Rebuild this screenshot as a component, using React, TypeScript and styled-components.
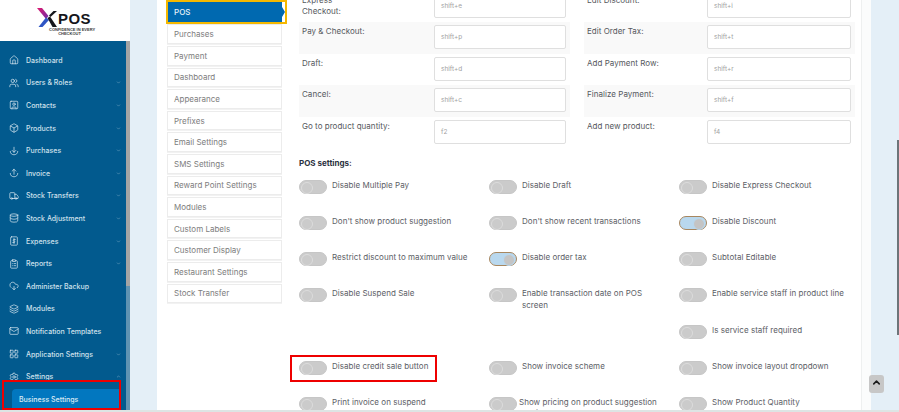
import React from 'react';
import styled, { createGlobalStyle } from 'styled-components';
import {
  Home, Users, SquareUser, Box, Truck, Database,
  ClipboardList, CloudDownload, Layers, Mail, LayoutGrid, Settings, ChevronDown, ChevronUp,
} from 'lucide-react';

const Global = createGlobalStyle`
  html, body { margin: 0; padding: 0; background: #e4eff7; }
  body { font-family: Inter, "Liberation Sans", sans-serif; overflow: hidden; }
  * { box-sizing: border-box; }
`;

const Page = styled.div`
  width: 899px; height: 412px; overflow: hidden; display: grid;
  grid-template-columns: 130px 1fr; background: #e4eff7; position: relative;
  border-bottom: 2px solid #dde5e4;
`;
const Sidebar = styled.aside`
  display: flex; flex-direction: column; height: 410px; overflow: hidden;
`;
const LogoBox = styled.div`
  height: 41px; background: #fff; display: flex; flex-direction: column; align-items: flex-start; padding: 8px 0 0 37px; flex: none;
`;
const LogoMark = styled.div`
  display: flex; align-items: center; height: 19px;
`;
const LogoWord = styled.span`
  font-family: "Liberation Sans", sans-serif; font-weight: 700; font-size: 15px; color: #16161c; letter-spacing: 0.4px; line-height: 18px; margin-top: 2px;
`;
const Tagline = styled.div`
  font-family: "Liberation Sans", sans-serif; font-weight: 700; font-size: 4px; line-height: 3.8px; color: #3a3a3a; text-align: center; margin: 1px 0 0 12px; width: 41px; white-space: nowrap;
`;
const NavScroll = styled.div`
  flex: 1; background: #025a8e; display: flex; position: relative; min-height: 0;
`;
const NavList = styled.nav`
  width: 126px; padding-top: 8px; display: flex; flex-direction: column;
`;
const ScrollTrack = styled.div`
  width: 4px; background: #5f93b2;
`;
const ScrollThumb = styled.div`
  height: 245px; background: #a4a4a4;
`;
const NavRow = styled.div`
  height: 22.6px; flex: none; display: flex; align-items: center; padding-left: 9px; color: #cfe0ec; font-size: 7px; font-weight: 500;
  svg.icon { width: 10px; height: 10px; margin-right: 7px; stroke-width: 1.6; flex: none; color: #e8f1f7; }
`;
const NavLabel = styled.span` flex: 1; white-space: nowrap; `;
const Caret = styled.span`
  display: flex; margin-right: 5px; color: #9fc0d5;
  svg { width: 5px; height: 5px; stroke-width: 2; }
`;
const ActiveFrame = styled.div`
  margin: -8px 5px 0 2px; height: 30px; border: 2px solid #ee0000; padding: 7px 0 0 8px; flex: none; position: relative;
`;
const ActiveItem = styled.div`
  height: 19px; background: #0277bf; border-radius: 4px 0 0 0; color: #dcebf5; font-size: 7px; font-weight: 500; display: flex; align-items: center; padding: 2px 0 0 7px;
`;

const Main = styled.main`
  padding: 0 28px 0 27px; height: 410px; overflow: hidden;
`;
const Card = styled.section`
  width: 714px; height: 410px; background: #fff; display: flex; overflow: hidden; padding-left: 9px;
  border-right: 9px solid #fbfcfc; box-shadow: inset -1px 0 0 #eef0f0;
`;
const TabList = styled.div`
  width: 121px; flex: none; display: flex; flex-direction: column;
`;
const PosTab = styled.div`
  height: 24.4px; border: 2px solid #f5b800; background: #fff; flex: none; display: flex;
`;
const PosFill = styled.div`
  width: 114px; background: #0069b0; color: #e6f1f8; font-size: 8px; font-weight: 500; display: flex; align-items: center; padding-left: 6px; position: relative;
`;
const Arrow = styled.span`
  position: absolute; right: -3px; top: 5px; width: 0; height: 0;
  border-top: 5px solid transparent; border-bottom: 5px solid transparent; border-left: 3px solid #0069b0;
`;
const Tab = styled.div`
  height: 19.6px; width: 115px; margin: 0 0 2px 1px; flex: none; background: #fff; border: 1px solid #ececec; color: #7d7d7d; font-size: 8px; display: flex; align-items: center; padding-left: 6px; box-shadow: 0 1px 0 #f2f2f2;
`;
const Panel = styled.div`
  flex: 1; padding-left: 12px; min-width: 0;
`;
const Shortcuts = styled.div`
  margin-top: -9px; display: grid; grid-template-columns: 271px 271px; column-gap: 14px;
`;
const ShortRow = styled.div<{ $shade?: boolean }>`
  height: 31.4px; display: flex; padding: 3px 4px 0 3px; background: ${p => (p.$shade ? '#f9f9f9' : '#fff')};
`;
const ShortLabel = styled.div<{ $w: number }>`
  width: ${p => p.$w}px; flex: none; font-size: 8px; line-height: 11px; color: #55585d; white-space: pre-line; padding-top: 1px; letter-spacing: 0.03px;
`;
const ShortInput = styled.div`
  height: 24px; flex: 1; border: 1px solid #dfdfdf; border-radius: 2px; background: #fff; font-size: 6.5px; color: #a2a2a2; display: flex; align-items: center; padding-left: 6px;
`;
const SectionTitle = styled.div`
  margin-top: 10px; font-size: 8px; font-weight: 700; color: #2b3140; line-height: 10px;
`;
const SettingGrid = styled.div`
  margin-top: 12px; display: grid; grid-template-columns: repeat(3, 190px); grid-auto-rows: 36.17px;
`;
const Setting = styled.div`
  display: flex; gap: 5px; align-items: flex-start; position: relative;
`;
const Flag = styled.span`
  position: absolute; left: -9px; top: -6px; width: 147px; height: 27px; border: 2px solid #ee0000;
`;
const Toggle = styled.span<{ $on?: boolean }>`
  width: 28px; height: 14px; flex: none; border-radius: 7px; position: relative;
  background: ${p => (p.$on ? '#b9d8ee' : '#cbcbcb')};
  border: ${p => (p.$on ? '1px solid #a8875f' : '1px solid #c6c6c6')};
  &::after {
    content: ''; position: absolute; top: 1px; width: 10px; height: 10px; border-radius: 50%;
    ${p => (p.$on ? 'right: 1px; background: #c4c4c4; border: 1px solid #b9d8ee;' : 'left: 1px; background: #cbcbcb; border: 1px solid #dcdcdc;')}
  }
`;
const SettingText = styled.span<{ $max?: number; $shift?: number }>`
  font-size: 8px; line-height: 11.5px; color: #5c6066; letter-spacing: 0.03px;
  max-width: ${p => (p.$max ? `${p.$max}px` : 'none')};
  margin-left: ${p => p.$shift ?? 0}px;
`;
const TopButton = styled.div`
  position: absolute; left: 869px; top: 375px; width: 15px; height: 18px; background: #c7c7c7; border-radius: 3px; display: flex; justify-content: center; color: #1b1b1b;
  svg { width: 11px; height: 11px; stroke-width: 3.4; margin-top: 2px; }
`;
const PageBar = styled.div`
  position: absolute; left: 897px; top: 140px; width: 2px; height: 195px; background: #6d7479;
`;

const Glyph: React.FC<{ children: React.ReactNode }> = ({ children }) => (
  <svg className="icon" viewBox="0 0 24 24" fill="none" stroke="currentColor" strokeLinecap="round" strokeLinejoin="round">
    {children}
  </svg>
);
const PurchaseIcon = () => (
  <Glyph><path d="M12 3v12M7.5 10.5 12 15l4.5-4.5M3 13c0 5 4 8 9 8s9-3 9-8" /></Glyph>
);
const InvoiceIcon = () => (
  <Glyph><path d="M12 15V3M7.5 7.5 12 3l4.5 4.5M3 13c0 5 4 8 9 8s9-3 9-8" /></Glyph>
);
const ExpenseIcon = () => (
  <Glyph>
    <rect x="4" y="2" width="16" height="20" rx="2" />
    <path d="M12 6v12M15 8.5h-4a2 2 0 0 0 0 3.5h2a2 2 0 0 1 0 3.5H9" />
  </Glyph>
);
const lucideIcon = (I: React.ComponentType<{ className?: string }>) => <I className="icon" />;

const nav: [React.ReactNode, string, boolean?][] = [
  [lucideIcon(Home), 'Dashboard'],
  [lucideIcon(Users), 'Users & Roles', true],
  [lucideIcon(SquareUser), 'Contacts', true],
  [lucideIcon(Box), 'Products', true],
  [<PurchaseIcon />, 'Purchases', true],
  [<InvoiceIcon />, 'Invoice', true],
  [lucideIcon(Truck), 'Stock Transfers', true],
  [lucideIcon(Database), 'Stock Adjustment', true],
  [<ExpenseIcon />, 'Expenses', true],
  [lucideIcon(ClipboardList), 'Reports', true],
  [lucideIcon(CloudDownload), 'Administer Backup'],
  [lucideIcon(Layers), 'Modules'],
  [lucideIcon(Mail), 'Notification Templates'],
  [lucideIcon(LayoutGrid), 'Application Settings', true],
];
const tabs = ['Purchases', 'Payment', 'Dashboard', 'Appearance', 'Prefixes', 'Email Settings', 'SMS Settings', 'Reward Point Settings', 'Modules', 'Custom Labels', 'Customer Display', 'Restaurant Settings', 'Stock Transfer'];
const shorts: [string, string, string, string][] = [
  ['Express\nCheckout:', 'shift+e', 'Edit Discount:', 'shift+i'],
  ['Pay & Checkout:', 'shift+p', 'Edit Order Tax:', 'shift+t'],
  ['Draft:', 'shift+d', 'Add Payment Row:', 'shift+r'],
  ['Cancel:', 'shift+c', 'Finalize Payment:', 'shift+f'],
  ['Go to product quantity:', 'f2', 'Add new product:', 'f4'],
];
const settings: { t?: string; on?: boolean; flag?: boolean; max?: number; shift?: number }[] = [
  { t: 'Disable Multiple Pay' }, { t: 'Disable Draft' }, { t: 'Disable Express Checkout' },
  { t: "Don't show product suggestion" }, { t: "Don't show recent transactions" }, { t: 'Disable Discount', on: true },
  { t: 'Restrict discount to maximum value' }, { t: 'Disable order tax', on: true }, { t: 'Subtotal Editable' },
  { t: 'Disable Suspend Sale' }, { t: 'Enable transaction date on POS screen', max: 124 }, { t: 'Enable service staff in product line' },
  {}, {}, { t: 'Is service staff required' },
  { t: 'Disable credit sale button', flag: true }, { t: 'Show invoice scheme' }, { t: 'Show invoice layout dropdown' },
  { t: 'Print invoice on suspend' }, { t: 'Show pricing on product suggestion tooltip', max: 142, shift: -3 }, { t: 'Show Product Quantity' },
];

export default function App() {
  return (
    <Page>
      <Global />
      <Sidebar>
        <LogoBox>
          <LogoMark>
            <svg width="21" height="19" viewBox="0 0 21 19">
              <defs>
                <linearGradient id="xg" x1="0" y1="0" x2="1" y2="1">
                  <stop offset="0" stopColor="#e0186f" />
                  <stop offset="1" stopColor="#6a2da8" />
                </linearGradient>
              </defs>
              <path d="M0 0 L5 0 L11.5 8 L9 11 Z" fill="url(#xg)" />
              <path d="M9 9.5 L12 12 L5.5 19 L1.5 19 Z" fill="#2f55c4" />
              <path d="M10.5 10 L13 8.5 L20 19 L15.5 19 Z" fill="#16161c" />
              <path d="M12 7.5 L16.5 3 L20 3 L13.5 9 Z" fill="#16161c" />
            </svg>
            <LogoWord>POS</LogoWord>
          </LogoMark>
          <Tagline>CONFIDENCE IN EVERY<br />CHECKOUT</Tagline>
        </LogoBox>
        <NavScroll>
          <NavList>
            {nav.map(([icon, label, caret]) => (
              <NavRow key={label}>
                {icon}
                <NavLabel>{label}</NavLabel>
                {caret && <Caret><ChevronDown /></Caret>}
              </NavRow>
            ))}
            <NavRow>
              <Settings className="icon" />
              <NavLabel>Settings</NavLabel>
              <Caret><ChevronUp /></Caret>
            </NavRow>
            <ActiveFrame><ActiveItem>Business Settings</ActiveItem></ActiveFrame>
          </NavList>
          <ScrollTrack><ScrollThumb /></ScrollTrack>
        </NavScroll>
      </Sidebar>
      <Main>
        <Card>
          <TabList>
            <PosTab><PosFill>POS<Arrow /></PosFill></PosTab>
            {tabs.map(t => <Tab key={t}>{t}</Tab>)}
          </TabList>
          <Panel>
            <Shortcuts>
              {shorts.map((r, i) => (
                <React.Fragment key={r[0]}>
                  <ShortRow $shade={i % 2 === 1}>
                    <ShortLabel $w={132}>{r[0]}</ShortLabel>
                    <ShortInput>{r[1]}</ShortInput>
                  </ShortRow>
                  <ShortRow $shade={i % 2 === 1}>
                    <ShortLabel $w={120}>{r[2]}</ShortLabel>
                    <ShortInput>{r[3]}</ShortInput>
                  </ShortRow>
                </React.Fragment>
              ))}
            </Shortcuts>
            <SectionTitle>POS settings:</SectionTitle>
            <SettingGrid>
              {settings.map((s, i) => (
                <Setting key={i}>
                  {s.t && <Toggle $on={s.on} />}
                  {s.t && <SettingText $max={s.max} $shift={s.shift}>{s.t}</SettingText>}
                  {s.flag && <Flag />}
                </Setting>
              ))}
            </SettingGrid>
          </Panel>
        </Card>
      </Main>
      <TopButton><ChevronUp /></TopButton>
      <PageBar />
    </Page>
  );
}
